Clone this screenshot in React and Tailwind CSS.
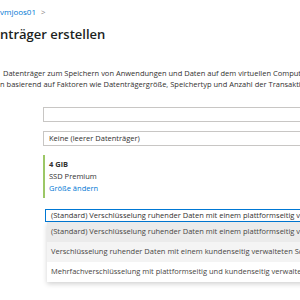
export default function App() {
  const options = [
    { label: '(Standard) Verschlüsselung ruhender Daten mit einem plattformseitig verwalteten Schlüssel', bg: 'bg-[#ebebeb]' },
    { label: 'Verschlüsselung ruhender Daten mit einem kundenseitig verwalteten Schlüssel', bg: 'bg-[#f4f4f4]' },
    { label: 'Mehrfachverschlüsselung mit plattformseitig und kundenseitig verwalteten Schlüsseln', bg: 'bg-white' },
  ];

  return (
    <div className="w-[300px] h-[300px] overflow-hidden bg-white font-['Open_Sans',sans-serif] text-[#323130]">
      <div className="pt-[7px] flex items-center gap-[5px] text-[8px] leading-[10px] text-[#0078d4] whitespace-nowrap">
        <span>vmjoos01</span>
        <span className="text-[#8a8886]">&gt;</span>
      </div>
      <div className="mt-[8px] text-[13px] leading-[18px] font-semibold whitespace-nowrap text-[#201f1e]">
        nträger erstellen
      </div>

      <div className="mt-[25px] text-[7.5px] leading-[11px] whitespace-nowrap">
        <div className="pl-[3px]">Datenträger zum Speichern von Anwendungen und Daten auf dem virtuellen Computer.</div>
        <div>n basierend auf Faktoren wie Datenträgergröße, Speichertyp und Anzahl der Transaktionen.</div>
      </div>

      <div className="ml-[43px] mt-[17px] flex flex-col">
        <div className="h-[15px] w-[280px] border border-[#c8c6c4] bg-white" />
        <div className="mt-[9px] h-[15px] w-[280px] border border-[#c8c6c4] bg-white flex items-center pl-[5px] text-[7.5px] whitespace-nowrap">
          Keine (leerer Datenträger)
        </div>

        <div className="mt-[9px] border-l-2 border-[#9cc766] pl-[4px] pt-[3px] pb-[4px] text-[7.5px] leading-[12px] whitespace-nowrap">
          <div className="font-bold">4 GiB</div>
          <div>SSD Premium</div>
          <div className="text-[#0078d4]">Größe ändern</div>
        </div>

        <div className="ml-[2px] mt-[11px] h-[13px] w-[280px] border border-[#0078d4] flex items-center pl-[5px] text-[7.5px] whitespace-nowrap">
          (Standard) Verschlüsselung ruhender Daten mit einem plattformseitig verwalteten Schlüssel
        </div>
        <div className="ml-[4px] w-[280px] bg-white shadow-[0_2px_5px_rgba(0,0,0,0.18)] flex flex-col">
          {options.map((o) => (
            <div key={o.label} className={`${o.bg} h-[20px] flex items-center pl-[4px] text-[7.5px] text-[#484644] whitespace-nowrap`}>
              {o.label}
            </div>
          ))}
        </div>
      </div>
    </div>
  );
}
